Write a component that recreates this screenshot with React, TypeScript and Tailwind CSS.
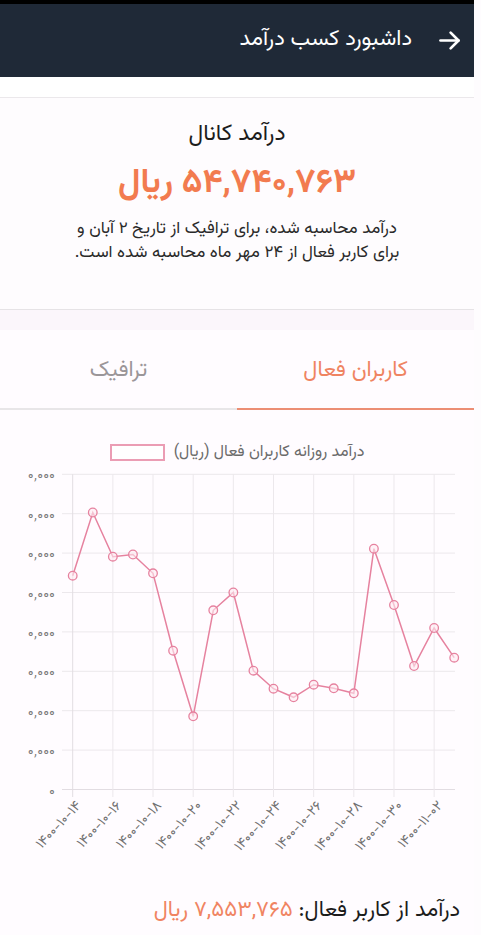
import React from "react";

const FONT = '"Vazirmatn", "Noto Sans Arabic", "DejaVu Sans", sans-serif';

const pts: number[] = [
  575.7, 512.5, 556.7, 554.5, 573.3, 650.7, 716.3, 610.3, 592.5, 670.7,
  688.7, 697.3, 684.7, 688.3, 693.3, 548.7, 605.0, 666.0, 628.0, 657.7,
];

const xLabels = [
  "۱۴۰۰-۱۰-۱۴",
  "۱۴۰۰-۱۰-۱۶",
  "۱۴۰۰-۱۰-۱۸",
  "۱۴۰۰-۱۰-۲۰",
  "۱۴۰۰-۱۰-۲۲",
  "۱۴۰۰-۱۰-۲۴",
  "۱۴۰۰-۱۰-۲۶",
  "۱۴۰۰-۱۰-۲۸",
  "۱۴۰۰-۱۰-۳۰",
  "۱۴۰۰-۱۱-۰۲",
];

function Chart() {
  const x0 = 72.7;
  const step = 20.08;
  const gy0 = 474.3;
  const gstep = 39.4;
  const hLines = Array.from({ length: 9 }, (_, i) => gy0 + i * gstep);
  const vLines = Array.from({ length: 10 }, (_, k) => x0 + k * step * 2);
  const path = pts.map((y, i) => `${i === 0 ? "M" : "L"}${(x0 + i * step).toFixed(1)} ${y}`).join(" ");
  return (
    <svg
      width={474}
      height={419}
      viewBox="0 461 474 419"
      style={{ direction: "ltr", display: "block", fontFamily: FONT }}
    >
      {hLines.map((y, i) => (
        <line key={"h" + i} x1={62} x2={455} y1={y} y2={y} stroke={i === 8 ? "#e2dde2" : "#ece8ec"} strokeWidth={1} />
      ))}
      {vLines.map((x, k) => (
        <line key={"v" + k} x1={x} x2={x} y1={gy0} y2={797} stroke={k === 0 ? "#e2dde2" : "#ece8ec"} strokeWidth={1} />
      ))}
      {hLines.map((y, i) => (
        <text key={"yl" + i} x={55} y={y + 5} textAnchor="end" fontSize={14} fill="#7a7a7a" letterSpacing={2}>
          {i === 8 ? "۰" : "۰٬۰۰۰"}
        </text>
      ))}
      {xLabels.map((t, k) => (
        <text
          key={"xl" + k}
          x={0}
          y={0}
          textAnchor="end"
          fontSize={14}
          fill="#707070"
          transform={`translate(${vLines[k] + 9} ${806}) rotate(-47)`}
        >
          {t}
        </text>
      ))}
      <path d={path} fill="none" stroke="#e6829f" strokeWidth={1.5} />
      {pts.map((y, i) => (
        <circle key={"c" + i} cx={x0 + i * step} cy={y} r={4.3} fill="rgba(255,235,242,0.6)" stroke="#e6829f" strokeWidth={1.3} />
      ))}
    </svg>
  );
}

export default function App() {
  return (
    <div className="w-[481px] bg-[#fefcfe]" style={{ fontFamily: FONT }}>
      <div className="w-[474px]">
        {/* Header */}
        <div dir="rtl" className="h-[77px] border-t-[4px] border-black bg-[#1f2937] flex items-center pr-[11px] gap-[24px]">
          <svg width="27" height="27" viewBox="0 0 24 24" fill="none" stroke="#ffffff" strokeWidth="2.4" strokeLinecap="round" strokeLinejoin="round">
            <path d="M4 12h16" />
            <path d="M13 5l7 7-7 7" />
          </svg>
          <div className="text-white text-[22px] leading-none pb-[2px]">داشبورد کسب درآمد</div>
        </div>

        {/* Summary card */}
        <div className="h-[20px] bg-white" />
        <div dir="rtl" className="border-t border-[#ebe8eb] bg-[#fefcfe] flex flex-col items-center h-[212px]">
          <div className="mt-[22px] text-[23px] leading-[28px] text-[#1c1c1c]">درآمد کانال</div>
          <div className="mt-[13px] text-[34px] leading-[46px] font-bold text-[#f27b4f]">۵۴,۷۴۰,۷۶۳ ریال</div>
          <div className="mt-[10px] text-[17px] leading-[24px] text-[#2a2a2a] text-center whitespace-nowrap">
            درآمد محاسبه شده، برای ترافیک از تاریخ ۲ آبان و
            <br />
            برای کاربر فعال از ۲۴ مهر ماه محاسبه شده است.
          </div>
        </div>
        <div className="border-t border-[#e6e3e6] h-[21px] bg-[#fbf6fb]" />

        {/* Tabs */}
        <div dir="rtl" className="grid grid-cols-2 h-[80px] bg-[#fffcff]">
          <div className="flex items-center justify-center border-b-2 border-[#ec8e74] text-[22px] text-[#ef8462] pt-[2px]">
            کاربران فعال
          </div>
          <div className="flex items-center justify-center border-b-2 border-[#e8e6e8] text-[22px] text-[#9b9699] pt-[2px]">
            ترافیک
          </div>
        </div>

        {/* Chart */}
        <div className="bg-[#fffcff]">
          <div dir="rtl" className="pt-[34px] flex justify-center items-center gap-[9px] h-[51px]">
            <span className="text-[16px] leading-[17px] text-[#6b6b6b]">درآمد روزانه کاربران فعال (ریال)</span>
            <span className="w-[55px] h-[17px] border-2 border-[#eb9db4] bg-white" />
          </div>
          <Chart />
        </div>

        {/* Bottom */}
        <div dir="rtl" className="bg-[#fffcff] h-[60px] pr-[14px] flex items-center text-[22px]">
          <span className="text-[#1c1c1c]">درآمد از کاربر فعال:</span>
          <span className="text-[#f08462] mr-[6px]">۷,۵۵۳,۷۶۵ ریال</span>
        </div>
      </div>
    </div>
  );
}
